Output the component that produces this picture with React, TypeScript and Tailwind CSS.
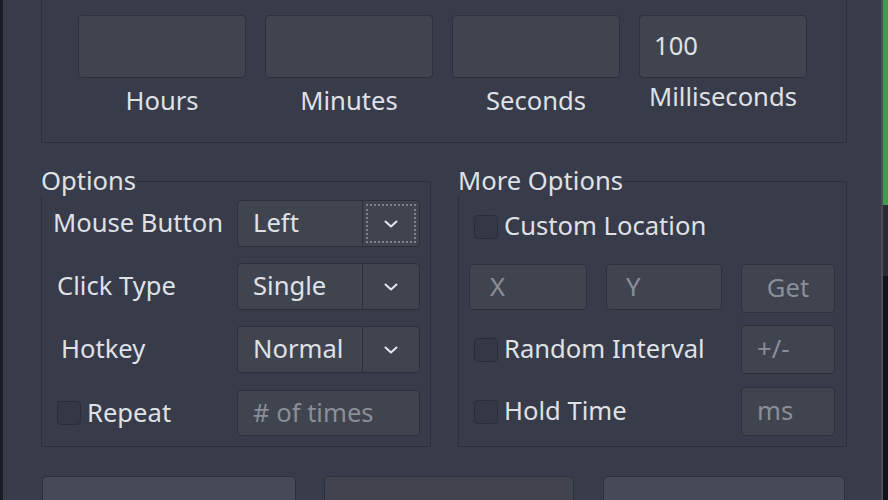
import React from "react";

const font = "font-['Noto_Sans','Open_Sans',sans-serif]";

function Chevron() {
  return (
    <svg width="16" height="10" viewBox="0 0 16 10" fill="none">
      <path d="M2.5 2.5l5.5 5 5.5-5" stroke="#e4e6eb" strokeWidth="2" strokeLinecap="round" strokeLinejoin="round" />
    </svg>
  );
}

function Combo({ value, focused }: { value: string; focused?: boolean }) {
  return (
    <div className="flex h-[47px] w-[183px] shrink-0 rounded-[4px] border border-[#2d303b] bg-[#40444f]">
      <div className="flex flex-1 items-center pl-[15px] text-[25.6px] text-[#dfe1e6]">{value}</div>
      <div className="flex w-[57px] items-center justify-center border-l border-[#2d303b] p-[3px]">
        <div
          className={
            focused
              ? "flex h-full w-full items-center justify-center border-2 border-dotted border-[#7f838e]"
              : "flex h-full w-full items-center justify-center"
          }
        >
          <Chevron />
        </div>
      </div>
    </div>
  );
}

function Box({ text, className }: { text?: string; className: string }) {
  return (
    <div
      className={
        "flex shrink-0 items-center rounded-[4px] border border-[#2e313c] bg-[#40444f] pl-[15px] text-[25.6px] " +
        className
      }
    >
      {text}
    </div>
  );
}

function Check() {
  return <div className="h-[24px] w-[24px] shrink-0 rounded-[4px] border border-[#2a2d37] bg-[#343745]" />;
}

const timeFields = [
  { label: "Hours", value: "", lift: "mt-[8px]" },
  { label: "Minutes", value: "", lift: "mt-[8px]" },
  { label: "Seconds", value: "", lift: "mt-[8px]" },
  { label: "Milliseconds", value: "100", lift: "mt-[4px]" },
];

export default function App() {
  return (
    <div className={"flex h-[500px] w-[888px] overflow-hidden bg-[#383b49] text-[#dfe1e6] " + font}>
      <div className="w-[3px] shrink-0 bg-[#1c1d22]" />

      <div className="flex w-[878px] shrink-0 flex-col pl-[38px] pr-[34px]">
        {/* interval group, top edge scrolled out of view */}
        <div className="flex h-[143px] shrink-0 gap-[19px] border-x border-b border-[#2c2f3b] pl-[36px] pt-[15px]">
          {timeFields.map((f) => (
            <div key={f.label} className="flex w-[168px] shrink-0 flex-col items-center">
              <div className="flex h-[63px] w-full items-center rounded-[4px] border border-[#2e313c] bg-[#40444f] pl-[14px] text-[25.6px]">
                {f.value}
              </div>
              <div className={"text-[25.6px] leading-[30px] " + f.lift}>{f.label}</div>
            </div>
          ))}
        </div>

        <div className="mt-[23px] flex shrink-0 gap-[27px]">
          <fieldset className="w-[390px] min-w-0 shrink-0 border border-[#2c2f3b] pb-[10px] pr-[10px] pt-[4px]">
            <legend className="-ml-[1px] text-[25.6px] leading-[30px]">Options</legend>
            <div className="flex flex-col gap-[16px]">
              <div className="flex items-center">
                <span className="ml-[11px] flex-1 text-[25.6px]">Mouse Button</span>
                <Combo value="Left" focused />
              </div>
              <div className="flex items-center">
                <span className="ml-[15px] flex-1 text-[25.6px]">Click Type</span>
                <Combo value="Single" />
              </div>
              <div className="flex items-center">
                <span className="ml-[19px] flex-1 text-[25.6px]">Hotkey</span>
                <Combo value="Normal" />
              </div>
              <div className="mt-[1px] flex items-center">
                <div className="ml-[15px] flex flex-1 items-center gap-[6px]">
                  <Check />
                  <span className="text-[25.6px]">Repeat</span>
                </div>
                <Box text="# of times" className="h-[46px] w-[183px] text-[#8a8e99]" />
              </div>
            </div>
          </fieldset>

          <fieldset className="w-[389px] min-w-0 shrink-0 border border-[#2c2f3b] pb-[10px] pt-[4px]">
            <legend className="-ml-[1px] text-[25.6px] leading-[30px]">More Options</legend>
            <div className="pl-[10px] pr-[11px]">
              <div className="flex h-[53px] items-center gap-[6px] pl-[5px]">
                <Check />
                <span className="text-[25.6px]">Custom Location</span>
              </div>
              <div className="mt-[11px] flex h-[49px] items-start gap-[19px]">
                <Box text="X" className="h-[46px] w-[118px] pl-[20px] text-[#8a8e99]" />
                <Box text="Y" className="h-[46px] w-[116px] pl-[19px] text-[#8a8e99]" />
                <div className="ml-auto flex h-[49px] w-[94px] items-center justify-center rounded-[4px] border border-[#2e313c] bg-[#40444f] text-[25.6px] text-[#8a8e99]">
                  Get
                </div>
              </div>
              <div className="mt-[12px] flex h-[49px] items-center gap-[6px] pl-[5px]">
                <Check />
                <span className="flex-1 text-[25.6px]">Random Interval</span>
                <Box text="+/-" className="h-[49px] w-[94px] pl-[14px] text-[#8a8e99]" />
              </div>
              <div className="mt-[13px] flex h-[49px] items-center gap-[6px] pl-[5px]">
                <Check />
                <span className="flex-1 text-[25.6px]">Hold Time</span>
                <Box text="ms" className="h-[49px] w-[94px] pl-[14px] text-[#8a8e99]" />
              </div>
            </div>
          </fieldset>
        </div>

        <div className="mt-[29px] flex shrink-0 pl-[1px]">
          <div className="h-[50px] w-[254px] shrink-0 rounded-[5px] border border-[#2e313b] bg-[#464a57]" />
          <div className="ml-[28px] h-[50px] w-[250px] shrink-0 rounded-[5px] border border-[#2e313b] bg-[#41444f]" />
          <div className="ml-[29px] h-[50px] w-[242px] shrink-0 rounded-[5px] border border-[#2e313b] bg-[#464a57]" />
        </div>
      </div>

      {/* scrollbar */}
      <div className="w-[2px] shrink-0 bg-[#4b4e58]" />
      <div className="flex w-[5px] shrink-0 flex-col">
        <div className="h-[205px] bg-[#3f9d4a]" />
        <div className="h-[71px] bg-[#2a2b31]" />
        <div className="flex-1 bg-[#131418]" />
      </div>
    </div>
  );
}
